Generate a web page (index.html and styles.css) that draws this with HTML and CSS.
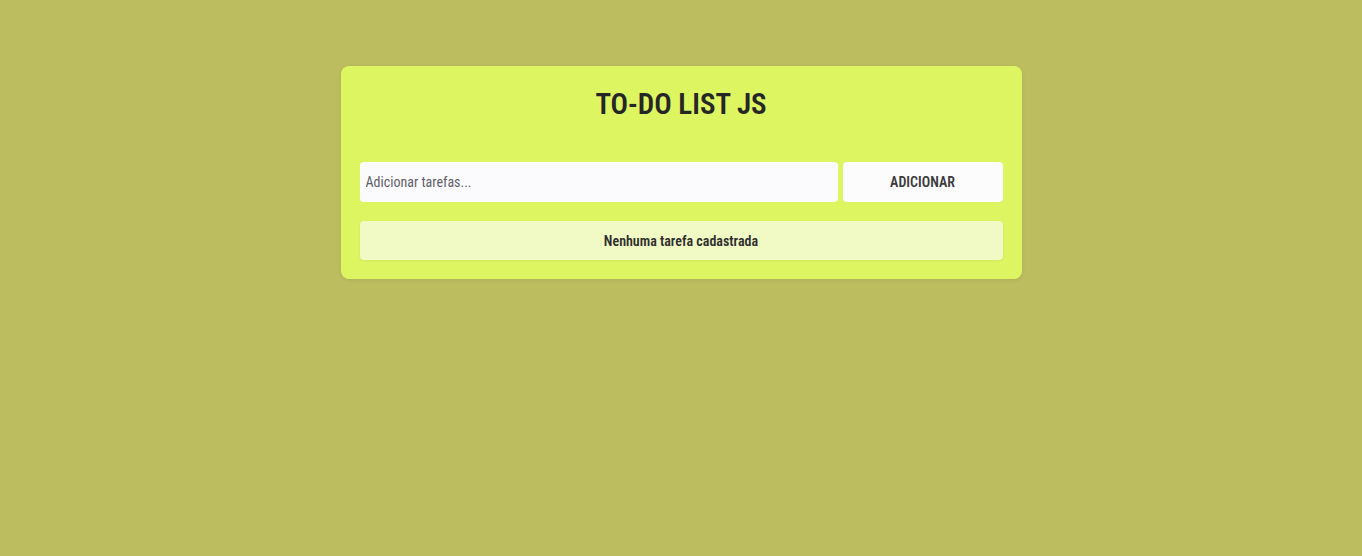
FILE: index.html
```html
<!DOCTYPE html>
<html lang="pt-BR">
<head>
<meta charset="utf-8">
<title>TO-DO LIST JS</title>
<link rel="stylesheet" href="styles.css">
</head>
<body>
<main class="card">
  <h1 class="title">TO-DO LIST JS</h1>
  <form class="add-form">
    <input class="task-input" type="text" placeholder="Adicionar tarefas...">
    <button class="add-btn" type="button">ADICIONAR</button>
  </form>
  <ul class="task-list">
    <li class="empty">Nenhuma tarefa cadastrada</li>
  </ul>
</main>
</body>
</html>
```
FILE: styles.css
```css
* { box-sizing: border-box; }
html, body { height: 100%; }
body {
  margin: 0;
  background: #bcbd5f;
  font-family: Roboto, "Liberation Sans", sans-serif;
  font-stretch: condensed;
  color: #2b2b2b;
  padding-top: 66px;
}
.card {
  width: 50%;
  margin: 0 auto;
  background: #dcf561;
  border-radius: 8px;
  padding: 20px 19px 19px 19px;
  box-shadow: 0 1px 4px rgba(0,0,0,0.08);
}
.title {
  margin: 0 0 40px 0;
  text-align: center;
  font-size: 29px;
  font-weight: 600;
  line-height: 36px;
  color: #262626;
}
.add-form {
  display: flex;
  gap: 5px;
  margin: 0;
}
.task-input {
  flex: 1;
  height: 40px;
  border: none;
  border-radius: 4px;
  background: #fbfbfd;
  padding: 0 6px;
  font-family: inherit;
  font-stretch: condensed;
  font-size: 14px;
  color: #333;
  outline: none;
}
.task-input::placeholder { color: #5f5f6a; }
.add-btn {
  width: 160px;
  height: 40px;
  border: none;
  border-radius: 4px;
  background: #fcfcfd;
  font-family: inherit;
  font-stretch: condensed;
  font-size: 14px;
  font-weight: 600;
  color: #3a3a3a;
}
.task-list {
  list-style: none;
  margin: 19px 0 0 0;
  padding: 0;
}
.empty {
  height: 39px;
  border-radius: 4px;
  background: #f1f9c4;
  display: flex;
  align-items: center;
  justify-content: center;
  font-size: 14px;
  font-weight: 600;
  color: #2e2e2e;
  box-shadow: 0 1px 3px rgba(0,0,0,0.06);
}
```
